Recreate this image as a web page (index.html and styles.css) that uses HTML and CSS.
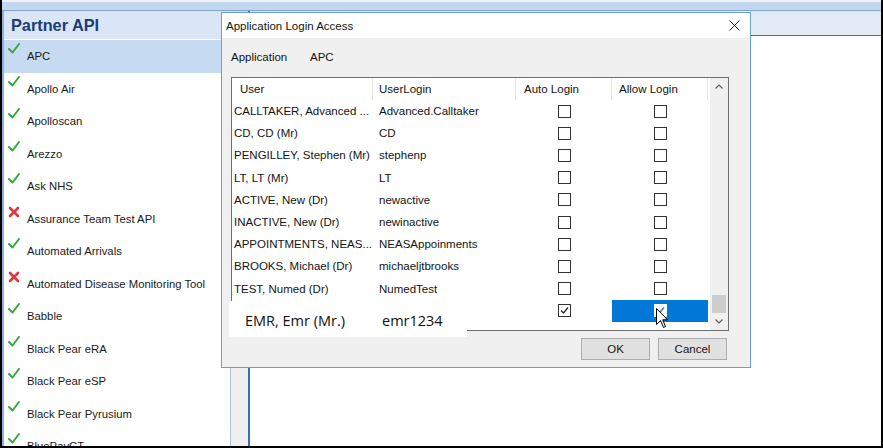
FILE: index.html
```html
<!DOCTYPE html>
<html>
<head>
<meta charset="utf-8">
<link rel="stylesheet" href="styles.css">
</head>
<body>
<div class="frame">
  <div class="topband"></div>
  <div class="main">
    <aside class="left">
      <div class="left-head">Partner API</div>
      <div class="list-area">
        <ul class="list">
          <li class="item sel"><svg class="ok" width="12" height="11" viewBox="0 0 12 11"><path d="M1 6 L4.5 9.5 L11 1"/></svg><span>APC</span></li>
          <li class="item"><svg class="ok" width="12" height="11" viewBox="0 0 12 11"><path d="M1 6 L4.5 9.5 L11 1"/></svg><span>Apollo Air</span></li>
          <li class="item"><svg class="ok" width="12" height="11" viewBox="0 0 12 11"><path d="M1 6 L4.5 9.5 L11 1"/></svg><span>Apolloscan</span></li>
          <li class="item"><svg class="ok" width="12" height="11" viewBox="0 0 12 11"><path d="M1 6 L4.5 9.5 L11 1"/></svg><span>Arezzo</span></li>
          <li class="item"><svg class="ok" width="12" height="11" viewBox="0 0 12 11"><path d="M1 6 L4.5 9.5 L11 1"/></svg><span>Ask NHS</span></li>
          <li class="item"><svg class="no" width="12" height="12" viewBox="0 0 12 12"><path d="M2 2 L10 10 M10 2 L2 10"/></svg><span>Assurance Team Test API</span></li>
          <li class="item"><svg class="ok" width="12" height="11" viewBox="0 0 12 11"><path d="M1 6 L4.5 9.5 L11 1"/></svg><span>Automated Arrivals</span></li>
          <li class="item"><svg class="no" width="12" height="12" viewBox="0 0 12 12"><path d="M2 2 L10 10 M10 2 L2 10"/></svg><span>Automated Disease Monitoring Tool</span></li>
          <li class="item"><svg class="ok" width="12" height="11" viewBox="0 0 12 11"><path d="M1 6 L4.5 9.5 L11 1"/></svg><span>Babble</span></li>
          <li class="item"><svg class="ok" width="12" height="11" viewBox="0 0 12 11"><path d="M1 6 L4.5 9.5 L11 1"/></svg><span>Black Pear eRA</span></li>
          <li class="item"><svg class="ok" width="12" height="11" viewBox="0 0 12 11"><path d="M1 6 L4.5 9.5 L11 1"/></svg><span>Black Pear eSP</span></li>
          <li class="item"><svg class="ok" width="12" height="11" viewBox="0 0 12 11"><path d="M1 6 L4.5 9.5 L11 1"/></svg><span>Black Pear Pyrusium</span></li>
          <li class="item"><svg class="ok" width="12" height="11" viewBox="0 0 12 11"><path d="M1 6 L4.5 9.5 L11 1"/></svg><span>BluePayCT</span></li>
        </ul>
        <div class="vscroll"></div>
      </div>
    </aside>
    <div class="splitter"></div>
    <section class="right">
      <div class="right-head"></div>
      <div class="right-body"></div>
    </section>
  </div>

  <div class="dialog">
    <div class="dlg-title">
      <span>Application Login Access</span>
      <svg class="close" width="11" height="11" viewBox="0 0 11 11"><path d="M0.5 0.5 L10.5 10.5 M10.5 0.5 L0.5 10.5"/></svg>
    </div>
    <div class="dlg-body">
      <div class="app-row"><span class="app-label">Application</span><span>APC</span></div>
      <div class="grid">
        <div class="tbl">
          <div class="ghead">
            <div class="c-user h">User</div>
            <div class="c-login h">UserLogin</div>
            <div class="c-auto h">Auto Login</div>
            <div class="c-allow h">Allow Login</div>
          </div>
          <div class="grow"><div class="c-user">CALLTAKER, Advanced ...</div><div class="c-login">Advanced.Calltaker</div><div class="c-auto"><span class="cb"></span></div><div class="c-allow"><span class="cb"></span></div></div>
          <div class="grow"><div class="c-user">CD, CD (Mr)</div><div class="c-login">CD</div><div class="c-auto"><span class="cb"></span></div><div class="c-allow"><span class="cb"></span></div></div>
          <div class="grow"><div class="c-user">PENGILLEY, Stephen (Mr)</div><div class="c-login">stephenp</div><div class="c-auto"><span class="cb"></span></div><div class="c-allow"><span class="cb"></span></div></div>
          <div class="grow"><div class="c-user">LT, LT (Mr)</div><div class="c-login">LT</div><div class="c-auto"><span class="cb"></span></div><div class="c-allow"><span class="cb"></span></div></div>
          <div class="grow"><div class="c-user">ACTIVE, New (Dr)</div><div class="c-login">newactive</div><div class="c-auto"><span class="cb"></span></div><div class="c-allow"><span class="cb"></span></div></div>
          <div class="grow"><div class="c-user">INACTIVE, New (Dr)</div><div class="c-login">newinactive</div><div class="c-auto"><span class="cb"></span></div><div class="c-allow"><span class="cb"></span></div></div>
          <div class="grow"><div class="c-user">APPOINTMENTS, NEAS...</div><div class="c-login">NEASAppoinments</div><div class="c-auto"><span class="cb"></span></div><div class="c-allow"><span class="cb"></span></div></div>
          <div class="grow"><div class="c-user">BROOKS, Michael (Dr)</div><div class="c-login">michaeljtbrooks</div><div class="c-auto"><span class="cb"></span></div><div class="c-allow"><span class="cb"></span></div></div>
          <div class="grow"><div class="c-user">TEST, Numed (Dr)</div><div class="c-login">NumedTest</div><div class="c-auto"><span class="cb"></span></div><div class="c-allow"><span class="cb"></span></div></div>
          <div class="grow"><div class="c-user"></div><div class="c-login"></div>
            <div class="c-auto"><span class="cb"><svg width="11" height="11" viewBox="0 0 11 11"><path class="tick" d="M2 5.5 L4.5 8 L9 2.5"/></svg></span></div>
            <div class="c-allow sel"><span class="cb cb-sel"><svg width="11" height="11" viewBox="0 0 11 11"><path class="tick-blue" d="M2 5.5 L4.5 8 L9 2.5"/></svg></span></div>
          </div>
        </div>
        <div class="gscroll">
          <div class="arrow"><svg width="8" height="5" viewBox="0 0 8 5"><path d="M0.5 4.5 L4 1 L7.5 4.5"/></svg></div>
          <div class="track"><div class="thumb"></div></div>
          <div class="arrow"><svg width="8" height="5" viewBox="0 0 8 5"><path d="M0.5 0.5 L4 4 L7.5 0.5"/></svg></div>
        </div>
      </div>
      <div class="btn-row">
        <button class="btn">OK</button>
        <button class="btn">Cancel</button>
      </div>
    </div>

    <div class="emr"><span class="emr-name">EMR, Emr (Mr.)</span><span>emr1234</span></div>
    <svg class="cursor" width="13" height="21" viewBox="0 0 13 21"><path d="M0.5 0.5 L0.5 16.5 L4.5 12.5 L7.5 19.5 L9.5 18.5 L6.7 11.8 L11.5 11.8 Z"/></svg>
  </div>
</div>
</body>
</html>
```

FILE: styles.css
```css
* { box-sizing: border-box; }
html, body { margin: 0; padding: 0; }
body {
  width: 883px;
  height: 448px;
  overflow: hidden;
  background: #fff;
  font-family: "Liberation Sans", Arial, sans-serif;
}

.frame {
  position: relative;
  width: 883px;
  height: 448px;
  border: 2px solid #000;
  border-top: 0;
  display: flex;
  flex-direction: column;
}

.topband {
  flex: none;
  height: 11px;
  background: linear-gradient(#eef2f7 0 2px, #c3d7f1 2px);
  border-bottom: 1px solid #7fa4d8;
}

.main {
  flex: 1;
  display: flex;
  min-height: 0;
}

/* left panel */
.left {
  width: 246px;
  flex: none;
  border-left: 2px solid #8fb0dc;
  display: flex;
  flex-direction: column;
}
.left-head {
  flex: none;
  height: 29px;
  background: #dae6f6;
  border-bottom: 1px solid #fff;
  color: #1b3d7b;
  font-weight: bold;
  font-size: 16.3px;
  line-height: 28px;
  padding-left: 7px;
}
.list-area {
  flex: 1;
  display: flex;
  min-height: 0;
}
.list {
  width: 226px;
  flex: none;
  list-style: none;
  margin: 0;
  padding: 0;
  overflow: hidden;
}
.item {
  height: 32.5px;
  display: flex;
  align-items: flex-start;
  font-size: 11.3px;
  color: #1a1a1a;
}
.item.sel { background: #c6daf2; }
.item svg { flex: none; margin: 3px 0 0 4px; }
.item span { margin-left: 7px; padding-top: 9px; line-height: 14px; white-space: nowrap; }
.ok path { fill: none; stroke: #35a83c; stroke-width: 2; stroke-linecap: round; stroke-linejoin: round; }
.no path { fill: none; stroke: #e4353c; stroke-width: 2.6; stroke-linecap: round; }
.vscroll {
  width: 18px;
  flex: none;
  background: #f0f0f0;
  border-left: 1px solid #a8c3e6;
}

.splitter { width: 2px; flex: none; background: #3a6fb5; }

.right { flex: 1; display: flex; flex-direction: column; }
.right-head {
  flex: none;
  height: 25px;
  background: #e3ebf7;
  border-bottom: 1px solid #6b6b6b;
}
.right-body { flex: 1; background: #fff; }

/* dialog */
.dialog {
  position: absolute;
  left: 219px;
  top: 12px;
  width: 530px;
  height: 356px;
  border: 1px solid #6c9ed8;
  background: #f0f0f0;
  display: flex;
  flex-direction: column;
  font-size: 11.5px;
  color: #141414;
}
.dlg-title {
  flex: none;
  height: 25px;
  background: #fff;
  display: flex;
  align-items: center;
  justify-content: space-between;
  padding: 0 10px 0 4px;
}
.close path { stroke: #222; stroke-width: 1; fill: none; }
.dlg-body {
  flex: 1;
  display: flex;
  flex-direction: column;
  padding: 0 21px 0 9px;
}
.app-row {
  margin-top: 9px;
  height: 20px;
  display: flex;
  align-items: center;
}
.app-label { width: 79px; }

.grid {
  margin-top: 10px;
  height: 254px;
  border: 1px solid #6e6e6e;
  background: #fff;
  display: flex;
}
.tbl { width: 478px; flex: none; }
.ghead { display: flex; height: 22px; }
.ghead .h { border-right: 1px solid #e5e5e5; display: flex; align-items: center; }
.c-user { width: 141px; padding-left: 2px; flex: none; white-space: nowrap; overflow: hidden; }
.c-login { width: 143px; padding-left: 6px; flex: none; white-space: nowrap; overflow: hidden; }
.c-auto, .c-allow { width: 96px; flex: none; display: flex; align-items: center; justify-content: center; }
.ghead .c-user { padding-left: 8px; }
.ghead .c-auto { justify-content: flex-start; padding-left: 8px; }
.ghead .c-allow { justify-content: flex-start; padding-left: 7px; }
.grow { display: flex; height: 22.2px; align-items: center; }
.grow .c-auto, .grow .c-allow { height: 100%; }
.c-allow.sel { background: #0078d7; }
.cb {
  width: 13px;
  height: 13px;
  border: 1px solid #333;
  background: #fff;
  display: block;
}
.cb svg { display: block; }
.cb-sel { border-color: #fff; }
.tick { fill: none; stroke: #222; stroke-width: 1.2; }
.tick-blue { fill: none; stroke: #2a7fd6; stroke-width: 1.5; }

.gscroll {
  width: 18px;
  flex: none;
  margin-left: auto;
  background: #f0f0f0;
  display: flex;
  flex-direction: column;
}
.arrow { height: 17px; display: flex; align-items: center; justify-content: center; flex: none; }
.arrow path { fill: none; stroke: #606060; stroke-width: 1.2; }
.track { flex: 1; display: flex; flex-direction: column; justify-content: flex-end; align-items: center; }
.thumb { width: 14px; height: 18px; background: #cdcdcd; }

.btn-row {
  margin-top: 7px;
  margin-right: 2px;
  display: flex;
  justify-content: flex-end;
  gap: 8px;
}
.btn {
  width: 69px;
  height: 22px;
  background: #e1e1e1;
  border: 1px solid #adadad;
  font-family: "Liberation Sans", Arial, sans-serif;
  font-size: 11.5px;
  color: #141414;
  padding: 0;
}

.emr {
  position: absolute;
  left: 7px;
  top: 288px;
  width: 238px;
  height: 36px;
  background: #fff;
  display: flex;
  align-items: center;
  padding-top: 3px;
  font-family: "Open Sans", sans-serif;
  font-size: 14.5px;
  color: #111;
}
.emr-name { width: 153px; padding-left: 16px; flex: none; }

.cursor { position: absolute; left: 434px; top: 295px; }
.cursor path { fill: #fff; stroke: #000; stroke-width: 1; stroke-linejoin: miter; }
```
